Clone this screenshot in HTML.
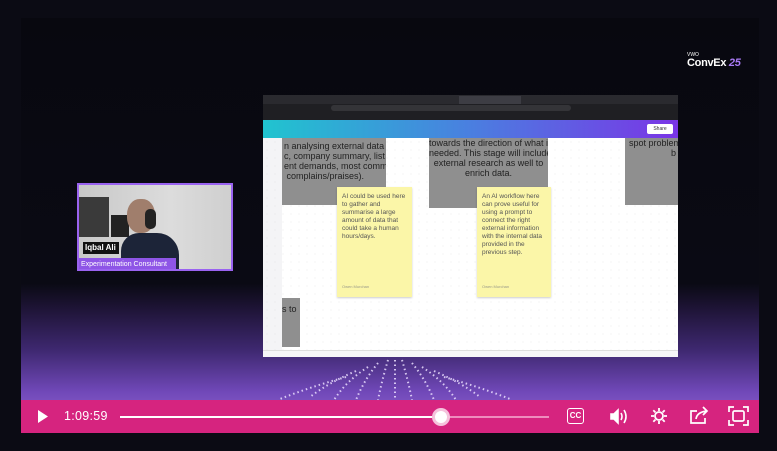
<!DOCTYPE html>
<html><head><meta charset="utf-8"><style>
*{margin:0;padding:0;box-sizing:border-box}
body{width:777px;height:451px;background:#0b0b14;overflow:hidden;position:relative;font-family:"Liberation Sans",sans-serif}
.abs{position:absolute}
#vid{left:21px;top:18px;width:738px;height:415px;background:linear-gradient(#08080f 0%,#0a0a14 64%,#1e1436 70%,#3e2870 80%,#7048b8 90%,#8c60cc 97%);overflow:hidden}
.bar{left:21px;top:400px;width:738px;height:33px;background:#d6247f}
.ss{left:263px;top:95px;width:415px;height:262px;background:#fff;overflow:hidden}
.g{background:#8f8f8f;color:#222;font-size:9px;line-height:10px;text-align:center;white-space:nowrap;overflow:hidden}
.y{background:#fbf6a8;color:#555;font-size:6.5px;line-height:8px;padding:6px 5px;box-shadow:0 1px 2px rgba(0,0,0,.2)}
.y .n{position:absolute;bottom:6px;left:5px;font-size:4px;color:#998}
</style></head><body>
<div id="vid" class="abs"></div>
<svg class="abs" style="left:250px;top:355px" width="290" height="45" viewBox="0 0 290 45">
<g stroke="#ece0ff" stroke-width="2" stroke-dasharray="1.5 3" fill="none" opacity=".85">
<path d="M145 5 L145 45"/><path d="M138 5 Q132 25 128 45"/><path d="M152 5 Q158 25 162 45"/>
<path d="M128 8 Q114 25 106 45"/><path d="M162 8 Q176 25 184 45"/><path d="M118 12 Q96 26 84 45"/><path d="M172 12 Q194 26 206 45"/>
<path d="M106 16 Q78 28 60 42"/><path d="M184 16 Q212 28 230 42"/><path d="M96 22 Q60 32 30 44"/><path d="M194 22 Q230 32 260 44"/>
</g></svg>
<div class="abs" style="left:687px;top:52px;color:#fff;font-size:5px">VWO</div>
<div class="abs" style="left:687px;top:57px;color:#fff;font-size:11px;font-weight:bold;letter-spacing:-.3px">ConvEx <span style="color:#a97af5;font-style:italic">25</span></div>

<div class="abs ss">
 <div class="abs" style="left:0;top:0;width:415px;height:9px;background:#2a2a2f"></div>
 <div class="abs" style="left:196px;top:1px;width:62px;height:8px;background:#3d3d44"></div>
 <div class="abs" style="left:0;top:9px;width:415px;height:8px;background:#1f1f23"></div>
 <div class="abs" style="left:68px;top:10px;width:240px;height:6px;background:#343438;border-radius:3px"></div>
 <div class="abs" style="left:0;top:17px;width:415px;height:8px;background:#1f1f23"></div>
 <div class="abs" style="left:0;top:25px;width:415px;height:18px;background:linear-gradient(90deg,#20c4cf,#4a7fe0 50%,#7a35e6)"></div>
 <div class="abs" style="left:384px;top:29px;width:26px;height:10px;background:#fff;border-radius:2px;font-size:5px;line-height:10px;text-align:center;color:#333">Share</div>
 <div class="abs" style="left:0;top:43px;width:19px;height:212px;background:#f4f4f6"></div>
 <div class="abs" style="left:0;top:43px;width:415px;height:212px;background-image:radial-gradient(#ddd 0.6px,transparent 0.7px);background-size:8px 8px;opacity:.6"></div>
 <div class="abs g" style="left:19px;top:43px;width:104px;height:67px;text-align:left;padding:3px 0 0 2px">n analysing external data (e.g.<br>c, company summary, list of<br>ent demands, most common<br>&nbsp;complains/praises).</div>
 <div class="abs g" style="left:166px;top:43px;width:119px;height:70px;padding-top:0">towards the direction of what is<br>needed. This stage will include<br>external research as well to<br>enrich data.</div>
 <div class="abs g" style="left:362px;top:43px;width:60px;height:67px;text-align:left;padding:0 0 0 4px">spot problem<br><span style="padding-left:42px">b</span></div>
 <div class="abs g" style="left:19px;top:203px;width:18px;height:49px;text-align:left;padding-top:6px">s to</div>
 <div class="abs y" style="left:74px;top:92px;width:75px;height:110px">AI could be used here to gather and summarise a large amount of data that could take a human hours/days.<div class="n">Owen Murchan</div></div>
 <div class="abs y" style="left:214px;top:92px;width:74px;height:110px">An AI workflow here can prove useful for using a prompt to connect the right external information with the internal data provided in the previous step.<div class="n">Owen Murchan</div></div>
 <div class="abs" style="left:0;top:255px;width:415px;height:7px;background:#f6f6f8;border-top:1px solid #ddd"></div>
</div>

<div class="abs" style="left:77px;top:183px;width:156px;height:88px;border:2px solid #9a63f0;background:linear-gradient(90deg,#c8c8c8,#dcdcdc 60%,#cfcfcf);overflow:hidden">
 <div class="abs" style="left:0;top:12px;width:30px;height:40px;background:#3a3a3a"></div>
 <div class="abs" style="left:32px;top:30px;width:18px;height:22px;background:#222"></div>
 <div class="abs" style="left:42px;top:48px;width:58px;height:40px;background:#1c2438;border-radius:18px 22px 0 0"></div>
 <div class="abs" style="left:48px;top:14px;width:28px;height:34px;background:#a07e6c;border-radius:45%"></div>
 <div class="abs" style="left:66px;top:24px;width:11px;height:20px;background:#222;border-radius:5px"></div>
 <div class="abs" style="left:4px;top:57px;width:36px;height:12px;background:#111;color:#fff;font-size:8px;font-weight:bold;line-height:12px;padding-left:2px">Iqbal Ali</div>
 <div class="abs" style="left:0;top:73px;width:97px;height:13px;background:#8e55e6;color:#fff;font-size:7px;line-height:13px;padding-left:2px;white-space:nowrap">Experimentation Consultant</div>
</div>

<div class="abs bar">
 <svg class="abs" style="left:16px;top:9px" width="12" height="15"><path d="M1 1 L11 7.5 L1 14Z" fill="#fff"/></svg>
 <div class="abs" style="left:43px;top:9px;color:#fff;font-size:12.5px;letter-spacing:.3px">1:09:59</div>
 <div class="abs" style="left:99px;top:16px;width:330px;height:2px;background:#fff"></div>
 <div class="abs" style="left:429px;top:16px;width:99px;height:2px;background:#ee8cbd"></div>
 <div class="abs" style="left:411px;top:8px;width:18px;height:18px;border-radius:50%;background:#fff;border:3px solid #f5c2dc"></div>
 <div class="abs" style="left:546px;top:8px;width:17px;height:16px;border:1.7px solid #fff;border-radius:3px;color:#fff;font-size:8px;font-weight:bold;line-height:13px;text-align:center">CC</div>
 <svg class="abs" style="left:589px;top:8px" width="20" height="17" fill="none" stroke="#fff" stroke-width="1.6"><path d="M1 6h3l4-4v13l-4-4H1z" fill="#fff"/><path d="M11 5q2 3.5 0 7M14 2q4 6.5 0 13"/></svg>
 <svg class="abs" style="left:629px;top:7px" width="18" height="18" fill="none" stroke="#fff" stroke-width="1.8"><circle cx="9" cy="9" r="4"/><path d="M9 1v3M9 14v3M1 9h3M14 9h3M3.3 3.3l2.1 2.1M12.6 12.6l2.1 2.1M3.3 14.7l2.1-2.1M12.6 5.4l2.1-2.1"/></svg>
 <svg class="abs" style="left:668px;top:6px" width="21" height="19" fill="none" stroke="#fff" stroke-width="1.7"><path d="M8 5H2v12h14v-5"/><path d="M7 13q1-7 11-8M14 1l4 4-4 4"/></svg>
 <svg class="abs" style="left:707px;top:6px" width="21" height="20" fill="none" stroke="#fff" stroke-width="1.7"><path d="M1 6V1h5M15 1h5v5M20 14v5h-5M6 19H1v-5"/><rect x="5" y="5" width="11" height="10" rx="1.5"/></svg>
</div>
</body></html>
